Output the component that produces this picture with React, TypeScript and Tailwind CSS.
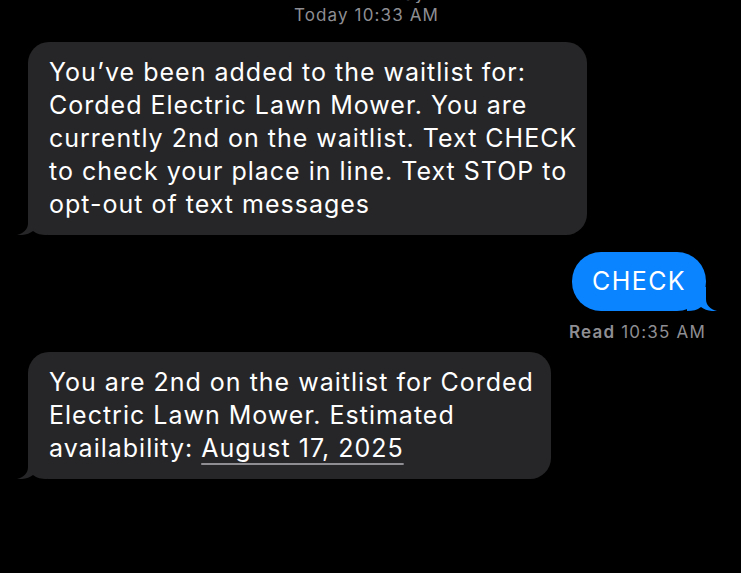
import React from 'react';

function Tail({ color, side }: { color: string; side: 'left' | 'right' }) {
  return (
    <svg
      width="30"
      height="24"
      viewBox="0 0 30 24"
      className={`absolute bottom-0 ${side === 'left' ? '-left-[11px]' : '-right-[11px] -scale-x-100'}`}
    >
      <path d="M11 0 L11 12 C11 18 7 22 0 24 C7 24.5 12 23 16 20 C20 23 24 24 30 24 L30 0 Z" fill={color} />
    </svg>
  );
}

function Received({ children, width }: { children: React.ReactNode; width: string }) {
  return (
    <div className={`relative ml-[28px] ${width} rounded-[21px] bg-[#262628] px-[21px] py-[14px] text-[25px] leading-[33px] tracking-[0.04em] whitespace-nowrap text-white`}>
      {children}
      <Tail color="#262628" side="left" />
    </div>
  );
}

export default function App() {
  return (
    <div
      className="w-[741px] h-[573px] overflow-hidden bg-black flex flex-col"
      style={{ fontFamily: 'Inter, "Noto Sans", sans-serif' }}
    >
      <div className="h-[3px] overflow-hidden flex justify-center">
        <span className="text-[17px] leading-[17px] tracking-[0.067em] text-[#8e8e93] -mt-[14px] ml-[20px]">Yesterday</span>
      </div>
      <div className="text-center text-[17px] leading-[24px] tracking-[0.067em] text-[#8e8e93] pr-[8px]">
        Today 10:33 AM
      </div>

      <div className="mt-[15px]">
        <Received width="w-[559px]">
          You’ve been added to the waitlist for:
          <br />
          Corded Electric Lawn Mower. You are
          <br />
          currently 2nd on the waitlist. Text CHECK
          <br />
          to check your place in line. Text STOP to
          <br />
          opt-out of text messages
        </Received>
      </div>

      <div className="mt-[17px] flex flex-col items-end pr-[35px]">
        <div className="relative rounded-[29px] bg-[#0a84ff] px-[20px] py-[13px] text-[25px] leading-[33px] tracking-[0.056em] text-white">
          CHECK
          <Tail color="#0a84ff" side="right" />
        </div>
        <div className="mt-[9px] text-[17px] leading-[24px] tracking-[0.07em] text-[#8e8e93]">
          <span className="font-semibold">Read</span> 10:35 AM
        </div>
      </div>

      <div className="mt-[8px]">
        <Received width="w-[523px]">
          You are 2nd on the waitlist for Corded
          <br />
          Electric Lawn Mower. Estimated
          <br />
          availability:{' '}
          <span className="underline decoration-[#8e8e93] decoration-2 underline-offset-[6px]">August 17, 2025</span>
        </Received>
      </div>
    </div>
  );
}
